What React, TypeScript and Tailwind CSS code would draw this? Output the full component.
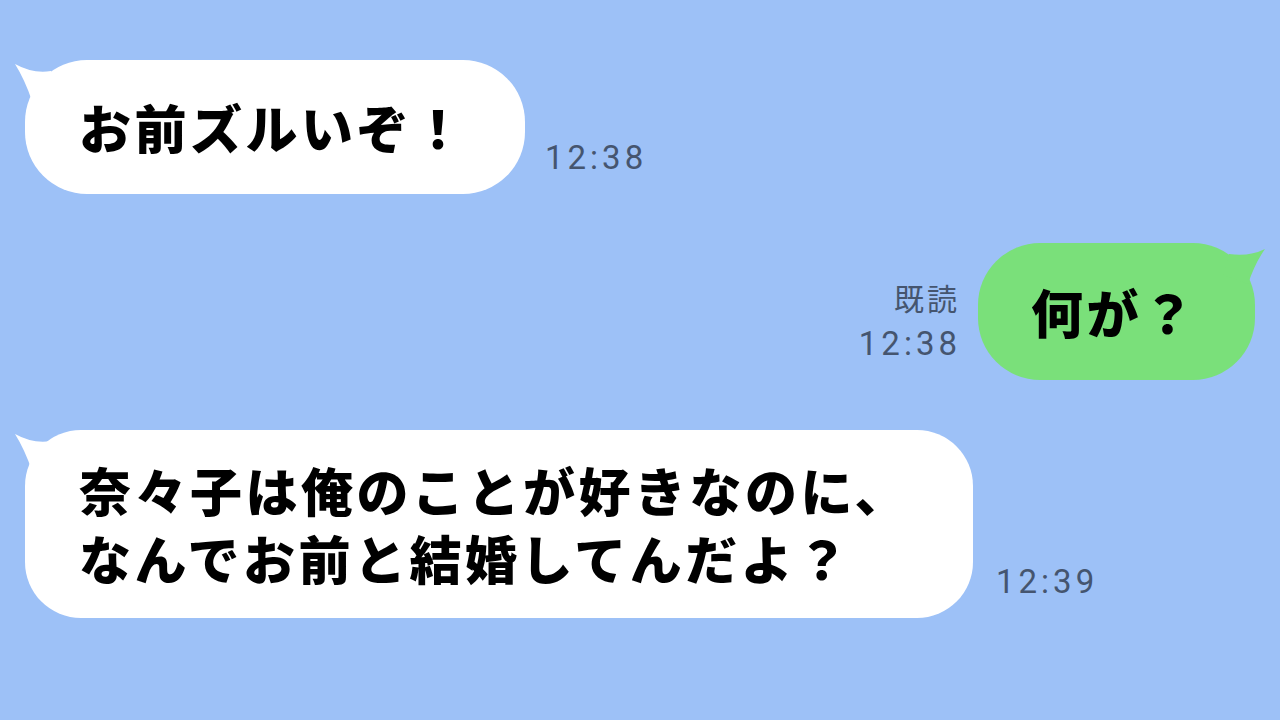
import React from "react";

const jp = { fontFamily: '"Noto Sans CJK JP", "Noto Sans", sans-serif' };
const num = { fontFamily: 'Roboto, "Noto Sans CJK JP", sans-serif' };

function TailLeft({ color }: { color: string }) {
  return (
    <svg
      className="absolute left-[-12px] top-0"
      width="50"
      height="50"
      viewBox="-12 0 50 50"
    >
      <path d="M26 11 Q 8 14 -10 4 Q 0 20 7 41 L 32 32 Z" fill={color} />
    </svg>
  );
}

function TailRight({ color }: { color: string }) {
  return (
    <svg
      className="absolute right-[-12px] top-0"
      width="50"
      height="50"
      viewBox="0 0 50 50"
    >
      <path d="M12 11 Q 32 14 48 6 Q 38 20 31 41 L 6 32 Z" fill={color} />
    </svg>
  );
}

export default function App() {
  return (
    <div className="w-[1280px] h-[720px] bg-[#9dc1f7] flex flex-col pt-[60px] overflow-hidden">
      {/* Row 1 */}
      <div className="flex items-end pl-[25px] gap-[20px]">
        <div className="relative w-[500px] h-[134px] bg-white rounded-[62px] flex items-center pl-[54px]">
          <TailLeft color="#ffffff" />
          <span
            className="relative text-[52px] font-black text-black tracking-[3.5px] leading-none"
            style={jp}
          >
            お前ズルいぞ！
          </span>
        </div>
        <div
          className="text-[33px] leading-none text-[#45556f] tracking-[4px] mb-[20px]"
          style={num}
        >
          12:38
        </div>
      </div>

      {/* Row 2 */}
      <div className="flex items-end justify-end pr-[25px] gap-[21px] mt-[49px]">
        <div className="flex flex-col items-end mb-[20px] gap-[15px]">
          <div
            className="text-[30px] leading-none text-[#45556f] tracking-[3px] mr-[-3px]"
            style={jp}
          >
            既読
          </div>
          <div
            className="text-[33px] leading-none text-[#45556f] tracking-[4px] mr-[-4px]"
            style={num}
          >
            12:38
          </div>
        </div>
        <div className="relative w-[277px] h-[137px] bg-[#7ae07a] rounded-[62px] flex items-center pl-[53px]">
          <TailRight color="#7ae07a" />
          <span
            className="relative text-[52px] font-black text-black tracking-[3.5px] leading-none"
            style={jp}
          >
            何が？
          </span>
        </div>
      </div>

      {/* Row 3 */}
      <div className="flex items-end pl-[25px] gap-[23px] mt-[50px]">
        <div className="relative w-[948px] h-[188px] bg-white rounded-[56px] flex items-center pl-[54px]">
          <TailLeft color="#ffffff" />
          <div
            className="relative text-[52px] font-black text-black tracking-[3.5px] leading-[68px]"
            style={jp}
          >
            <div>奈々子は俺のことが好きなのに、</div>
            <div>なんでお前と結婚してんだよ？</div>
          </div>
        </div>
        <div
          className="text-[33px] leading-none text-[#45556f] tracking-[4px] mb-[20px]"
          style={num}
        >
          12:39
        </div>
      </div>
    </div>
  );
}
